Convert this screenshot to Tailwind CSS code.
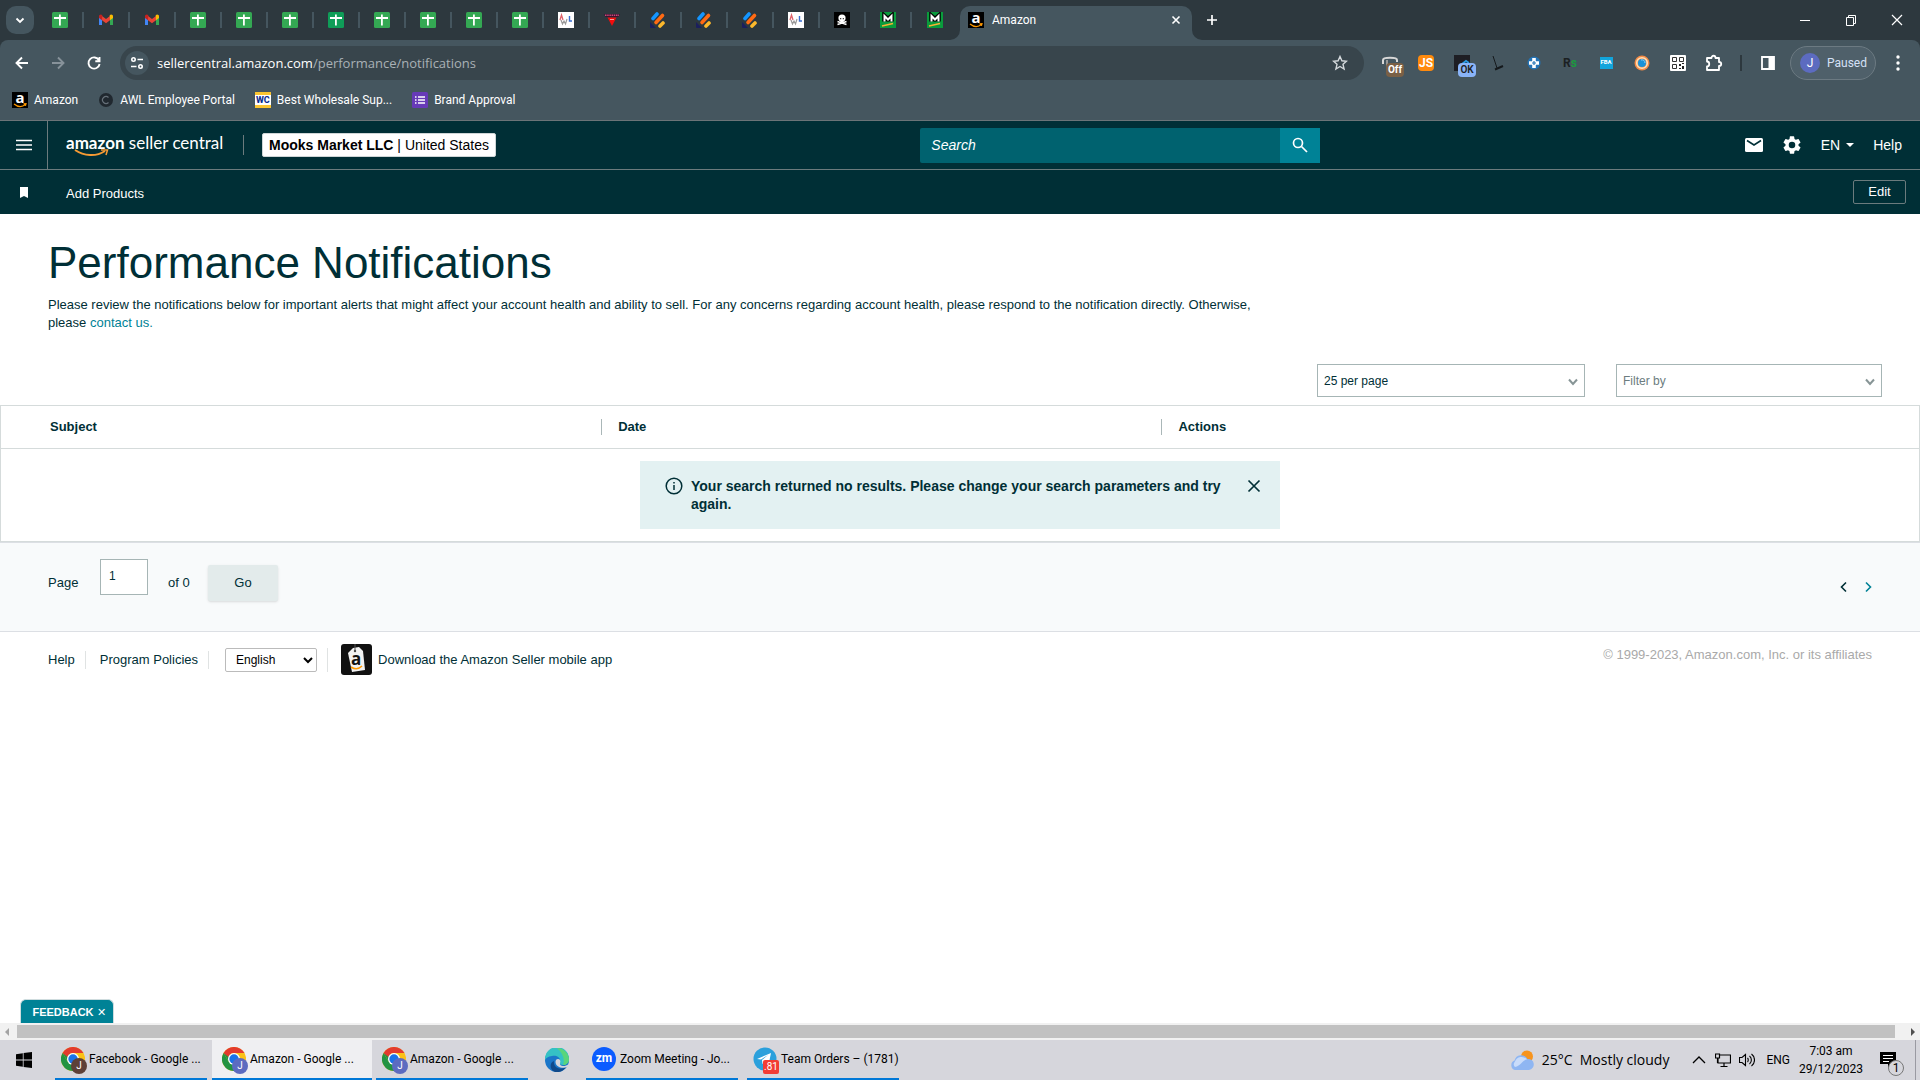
<!DOCTYPE html>
<html lang="en">
<head>
    <meta charset="UTF-8">
    <meta name="viewport" content="width=device-width, initial-scale=1.0">
    <title>Amazon</title>
    <script src="https://cdn.jsdelivr.net/npm/@tailwindcss/browser@4"></script>
</head>
<body class="min-h-screen flex flex-col bg-white text-[#002f36] text-[13px] leading-[18px] font-['Liberation_Sans',Arial,sans-serif]">

    <!-- Shared icons -->
    <svg class="hidden">
        <symbol id="sheets" viewBox="0 0 16 16"><rect width="16" height="16" rx="1.5" fill="#34a853"/><path d="M7.9 2.5v11M2 6h12" stroke="#fff" stroke-width="1.8"/></symbol>
        <symbol id="sheets-dark" viewBox="0 0 16 16"><rect width="16" height="16" rx="1.5" fill="#0f9d58"/><path d="M7.9 2.5v11M2 6h12" stroke="#fff" stroke-width="1.8"/></symbol>
        <symbol id="gmail" viewBox="0 0 16 16"><path d="M1 4.5v8.5h3V7z" fill="#4285f4"/><path d="M12 7v6h3V4.500z" fill="#34a853"/><path d="M4 4v4.200l4 3 4-3V4L8 7z" fill="#ea4335"/><path d="M1 4.500C1 2.600 3 2 4.300 3.200L4 8.200 1 6z" fill="#c5221f"/><path d="M15 4.500c0-1.900-2-2.500-3.300-1.300l.3 5L15 6z" fill="#fbbc04"/></symbol>
        <symbol id="awl" viewBox="0 0 16 16"><rect width="16" height="16" fill="#fff"/><path d="M2 8l1.500-5L5 8" stroke="#e0626a" stroke-width="1.300" fill="none"/><path d="M3 8l1.500 4L6 9l1.500 3L9 7" stroke="#999" stroke-width="1.200" fill="none"/><path d="M11.500 4v5H14" stroke="#3b6fd0" stroke-width="1.400" fill="none"/></symbol>
        <symbol id="wedge" viewBox="0 0 16 16"><path d="M0 2h16l-1.500 3h-13z" fill="#3a1430"/><path d="M1 3.300h14" stroke="#c94a7a" stroke-width="1.500" stroke-dasharray="1.500 .7"/><path d="M3.500 5.500h9L8 14z" fill="#f20d0d"/><path d="M6 7.500h4" stroke="#f8a0a0"/></symbol>
        <symbol id="stripes" viewBox="0 0 16 16"><path d="M0 10l6 6H1a1 1 0 0 1-1-1z" fill="#1b1f5e"/><g stroke-linecap="round" stroke-width="3.600"><path d="M3 6.500L7 2" stroke="#1495ff"/><path d="M6 10.500L12.500 3.500" stroke="#ff6a13"/><path d="M10 14l3-3" stroke="#fdb92c"/></g></symbol>
        <symbol id="skull" viewBox="0 0 16 16"><rect width="16" height="16" fill="#000"/><circle cx="8" cy="6" r="3.600" fill="#fff"/><path d="M6.300 7h3.400v3H6.300z" fill="#fff"/><path d="M3.500 9.500l9 3M12.500 9.500l-9 3" stroke="#fff" stroke-width="1.500"/><circle cx="6.700" cy="6.700" r=".6"/><circle cx="9.300" cy="6.700" r=".6"/></symbol>
        <symbol id="menards" viewBox="0 0 16 16"><rect width="16" height="16" fill="#0a9b3c"/><path d="M4.500 9.500V4L8 7l3.500-3v5.500" stroke="#000" stroke-width="4.500" fill="none"/><path d="M4.500 9.500V4L8 7.500 11.500 4v5.500" stroke="#fff" stroke-width="2" fill="none"/><path d="M2 14l11-2.500" stroke="#f9b233" stroke-width="1.500"/></symbol>
        <symbol id="amazon" viewBox="0 0 16 16"><rect width="16" height="16" fill="#000"/><text x="8" y="11" text-anchor="middle" font-family="Open Sans,sans-serif" font-weight="700" font-size="15" fill="#fff">a</text><path d="M2 12c4 3.300 8 3.300 11.500.600M11.500 11.800l2.500-.2-.6 2.200" stroke="#f90" stroke-width="1.200" fill="none"/></symbol>
        <symbol id="chrome" viewBox="0 0 24 24"><circle cx="12" cy="12" r="12" fill="#fbc116"/><path d="M1.600 6A12 12 0 0 0 12 24l5.200-9L12 12 6.800 15z" fill="#229342"/><path d="M1.600 6l5.200 9L12 8z" fill="#229342"/><path d="M1.600 6A12 12 0 0 1 22.400 6H12a6 6 0 0 0-5.500 4z" fill="#e33b2e"/><circle cx="12" cy="12" r="6" fill="#fff"/><circle cx="12" cy="12" r="4.700" fill="#1a73e8"/></symbol>
    </svg>

    <!-- Browser window -->
    <div class="bg-[#2d383e] text-white text-[12px] leading-4 font-[Roboto,'Noto_Sans',sans-serif]">
        <div class="h-10 flex items-center">
            <button class="ml-[6px] mr-1 size-7 rounded-[10px] bg-[#45565f] flex items-center justify-center" aria-label="Search tabs">
                <svg class="size-4" viewBox="0 0 16 16" fill="none" stroke="#fff" stroke-width="1.800"><path d="M4.500 6.500L8 10l3.500-3.500"/></svg>
            </button>
            <div class="flex items-center">
                <div class="w-[46px] h-4 flex justify-center border-r-2 border-[#45565f]"><svg class="size-4"><use href="#sheets"/></svg></div>
                <div class="w-[46px] h-4 flex justify-center border-r-2 border-[#45565f]"><svg class="size-4"><use href="#gmail"/></svg></div>
                <div class="w-[46px] h-4 flex justify-center border-r-2 border-[#45565f]"><svg class="size-4"><use href="#gmail"/></svg></div>
                <div class="w-[46px] h-4 flex justify-center border-r-2 border-[#45565f]"><svg class="size-4"><use href="#sheets"/></svg></div>
                <div class="w-[46px] h-4 flex justify-center border-r-2 border-[#45565f]"><svg class="size-4"><use href="#sheets"/></svg></div>
                <div class="w-[46px] h-4 flex justify-center border-r-2 border-[#45565f]"><svg class="size-4"><use href="#sheets"/></svg></div>
                <div class="w-[46px] h-4 flex justify-center border-r-2 border-[#45565f]"><svg class="size-4"><use href="#sheets-dark"/></svg></div>
                <div class="w-[46px] h-4 flex justify-center border-r-2 border-[#45565f]"><svg class="size-4"><use href="#sheets"/></svg></div>
                <div class="w-[46px] h-4 flex justify-center border-r-2 border-[#45565f]"><svg class="size-4"><use href="#sheets"/></svg></div>
                <div class="w-[46px] h-4 flex justify-center border-r-2 border-[#45565f]"><svg class="size-4"><use href="#sheets"/></svg></div>
                <div class="w-[46px] h-4 flex justify-center border-r-2 border-[#45565f]"><svg class="size-4"><use href="#sheets"/></svg></div>
                <div class="w-[46px] h-4 flex justify-center border-r-2 border-[#45565f]"><svg class="size-4"><use href="#awl"/></svg></div>
                <div class="w-[46px] h-4 flex justify-center border-r-2 border-[#45565f]"><svg class="size-4"><use href="#wedge"/></svg></div>
                <div class="w-[46px] h-4 flex justify-center border-r-2 border-[#45565f]"><svg class="size-4"><use href="#stripes"/></svg></div>
                <div class="w-[46px] h-4 flex justify-center border-r-2 border-[#45565f]"><svg class="size-4"><use href="#stripes"/></svg></div>
                <div class="w-[46px] h-4 flex justify-center border-r-2 border-[#45565f]"><svg class="size-4"><use href="#stripes"/></svg></div>
                <div class="w-[46px] h-4 flex justify-center border-r-2 border-[#45565f]"><svg class="size-4"><use href="#awl"/></svg></div>
                <div class="w-[46px] h-4 flex justify-center border-r-2 border-[#45565f]"><svg class="size-4"><use href="#skull"/></svg></div>
                <div class="w-[46px] h-4 flex justify-center border-r-2 border-[#45565f]"><svg class="size-4"><use href="#menards"/></svg></div>
                <div class="w-[46px] h-4 flex justify-center"><svg class="size-4"><use href="#menards"/></svg></div>
            </div>
            <div class="self-end flex items-end -ml-2">
                <svg class="size-[10px]" viewBox="0 0 10 10"><path d="M10 0v10H0A10 10 0 0 0 10 0z" fill="#45565f"/></svg>
                <div class="w-[232px] h-[34px] rounded-t-[10px] bg-[#45565f] flex items-center pl-2 pr-2 pb-[6px] gap-2">
                    <svg class="size-4"><use href="#amazon"/></svg>
                    <span class="flex-1">Amazon</span>
                    <button aria-label="Close tab"><svg class="size-4" viewBox="0 0 16 16" stroke="#fff" stroke-width="1.600"><path d="M4.500 4.500l7 7M11.500 4.500l-7 7"/></svg></button>
                </div>
                <svg class="size-[10px]" viewBox="0 0 10 10"><path d="M0 0v10h10A10 10 0 0 1 0 0z" fill="#45565f"/></svg>
            </div>
            <button class="ml-[2px]" aria-label="New tab"><svg class="size-4" viewBox="0 0 16 16" stroke="#fff" stroke-width="1.700"><path d="M8 3v10M3 8h10"/></svg></button>
            <div class="ml-auto flex">
                <button class="w-[46px] flex justify-center" aria-label="Minimize"><svg class="size-4" viewBox="0 0 16 16" stroke="#fff"><path d="M3 8.500h10"/></svg></button>
                <button class="w-[46px] flex justify-center" aria-label="Restore"><svg class="size-4" viewBox="0 0 16 16" stroke="#fff" fill="none"><path d="M3.500 5.500h7v8h-7zM5.500 5.500v-2h7v8h-2"/></svg></button>
                <button class="w-[46px] flex justify-center" aria-label="Close"><svg class="size-4" viewBox="0 0 16 16" stroke="#fff" stroke-width="1.200"><path d="M3 3l10 10M13 3L3 13"/></svg></button>
            </div>
        </div>

        <!-- Address bar -->
        <div class="bg-[#45565f] rounded-t-lg">
            <div class="h-[46px] flex items-center pl-3 pr-3">
                <div class="flex gap-4 mr-4">
                    <button aria-label="Back"><svg class="size-5" viewBox="0 0 20 20" fill="none" stroke="#fff" stroke-width="1.900"><path d="M16 10H5M10 4.500L4.500 10l5.500 5.500"/></svg></button>
                    <button aria-label="Forward"><svg class="size-5" viewBox="0 0 20 20" fill="none" stroke="#87929a" stroke-width="1.900"><path d="M4 10h11M10 4.500l5.500 5.500-5.500 5.500"/></svg></button>
                    <button aria-label="Reload"><svg class="size-5" viewBox="0 0 20 20" fill="none" stroke="#fff" stroke-width="1.900"><path d="M15 7.300A5.600 5.600 0 1 0 15.600 11M15.500 4v4.200h-4.200"/></svg></button>
                </div>
                <div class="flex-1 h-[34px] rounded-full bg-[#38454c] flex items-center pl-[5px] pr-4">
                    <span class="size-6 rounded-full bg-[#45565f] flex items-center justify-center mr-2">
                        <svg class="size-4" viewBox="0 0 16 16" fill="none" stroke="#fff" stroke-width="1.600"><circle cx="4.500" cy="4.500" r="1.700"/><path d="M8.500 4.500H14M2 11.500h5.500"/><circle cx="11.500" cy="11.500" r="1.700"/></svg>
                    </span>
                    <span class="flex-1 text-[13px] text-[#a9b1b6] font-['Open_Sans','Noto_Sans',sans-serif]"><span class="text-white">sellercentral.amazon.com</span>/performance/notifications</span>
                    <button aria-label="Bookmark this tab"><svg class="size-4" viewBox="0 0 16 16" fill="none" stroke="#d5dadd" stroke-width="1.400"><path d="M8 1.500l1.900 4.300 4.600.4-3.500 3.100 1.100 4.700L8 11.500 3.900 14 5 9.300 1.500 6.200l4.600-.4z"/></svg></button>
                </div>
                <div class="ml-2 flex items-center">
                    <div class="relative w-9 flex justify-center">
                        <svg class="size-4" viewBox="0 0 16 16"><path d="M1 9V5c0-3 14-3 14 0v2" fill="none" stroke="#d8d8d8" stroke-width="2"/><path d="M5 5v10" stroke="#999" stroke-width="2"/></svg>
                        <span class="absolute left-[14px] top-2 w-[18px] text-center rounded-sm bg-[#7a6046] text-[10px] leading-[14px] font-bold">Off</span>
                    </div>
                    <div class="w-9 flex justify-center"><span class="size-4 rounded-sm bg-[#ff8a0d] text-center text-[12px] font-bold">JS</span></div>
                    <div class="relative w-9 flex justify-center">
                        <svg class="size-4" viewBox="0 0 16 16"><rect width="16" height="16" fill="#1e1e24"/><path d="M8 9l4-3 3 2" stroke="#2997e0" stroke-width="2" fill="none"/></svg>
                        <span class="absolute left-[14px] top-2 w-[18px] text-center rounded-sm bg-[#8ab4f8] text-[#202124] text-[10px] leading-[14px] font-semibold">OK</span>
                    </div>
                    <div class="w-9 flex justify-center"><svg class="size-4" viewBox="0 0 16 16" fill="none" stroke="#15191c"><path d="M3 1l4 12"/><path d="M5 14.500l8-3.500" stroke-width="2"/></svg></div>
                    <div class="w-9 flex justify-center"><svg class="size-4" viewBox="0 0 16 16"><circle cx="8" cy="8" r="6.500" fill="#2473b5"/><path d="M8 3v10M3 8h10" stroke="#fff" stroke-width="3.600"/><path d="M8 6v4M6 8h4" stroke="#2473b5" stroke-width="1.200"/></svg></div>
                    <div class="w-9 text-center text-[12px] font-bold text-[#1b1f22]">R<span class="text-[#1b9a3e]">s</span></div>
                    <div class="w-9 flex justify-center"><span class="w-[13px] h-3 bg-[#12a5dc] text-center text-[6px] leading-[10px] font-bold">FBA</span></div>
                    <div class="w-9 flex justify-center"><svg class="size-4" viewBox="0 0 16 16"><circle cx="8" cy="8" r="7.500" fill="#f58b45"/><circle cx="8" cy="8" r="5.300" fill="none" stroke="#fde0b8" stroke-width="1.600"/><circle cx="8" cy="8" r="4" fill="#1a92d8"/><path d="M7 5a3 3 0 0 1 4 3" stroke="#8ed0f4" fill="none"/></svg></div>
                    <div class="w-9 flex justify-center"><svg class="size-4" viewBox="0 0 16 16"><rect width="16" height="16" rx="1" fill="#fff"/><path d="M2.500 2.500h4v4h-4zM9.500 2.500h4v4h-4zM2.500 9.500h4v4h-4z" fill="none" stroke="#333"/><path d="M9 9h2v2H9zM12 11h2v3h-2zM9 13h2v1H9zM12 8h2v1h-2z" fill="#222"/></svg></div>
                    <button class="w-9 flex justify-center" aria-label="Extensions"><svg class="size-5" viewBox="0 0 20 20" fill="none" stroke="#fff" stroke-width="1.800" stroke-linejoin="round"><path d="M3 5h4.500c0-3 4-3 4 0H15v4c3 0 3 4 0 4v4H3v-3.500c3 0 3-5 0-5z"/></svg></button>
                </div>
                <div class="w-[2px] h-4 mx-2 bg-[#2d383e]"></div>
                <button class="w-9 flex justify-center" aria-label="Side panel"><svg class="size-4" viewBox="0 0 16 16"><path d="M2 2h12v12H2z" fill="none" stroke="#fff" stroke-width="1.800"/><path d="M8.500 2H14v12H8.500z" fill="#fff"/></svg></button>
                <button class="ml-1 w-[86px] h-[34px] rounded-full border border-[#6c7a82] bg-[#4f606a] flex items-center pl-[9px] gap-[7px] text-[#d5e0f7]">
                    <span class="size-5 rounded-full bg-[#5c6bc0] text-white leading-5">J</span>Paused
                </button>
                <button class="ml-3" aria-label="Menu"><svg class="size-5" viewBox="0 0 20 20" fill="#fff"><circle cx="10" cy="4" r="1.700"/><circle cx="10" cy="10" r="1.700"/><circle cx="10" cy="16" r="1.700"/></svg></button>
            </div>

            <!-- Bookmarks -->
            <div class="h-[35px] flex items-center pl-3 pb-[6px] gap-5 border-b border-[#6b7478]">
                <a href="#" class="flex items-center gap-[6px]"><svg class="size-4"><use href="#amazon"/></svg>Amazon</a>
                <a href="#" class="flex items-center gap-[6px]"><svg class="size-4" viewBox="0 0 16 16"><circle cx="8" cy="8" r="7" fill="#20282f"/><path d="M10.500 5.500a3.500 3.500 0 1 0 0 5" fill="none" stroke="#667079" stroke-width="1.200"/></svg>AWL Employee Portal</a>
                <a href="#" class="flex items-center gap-[6px]"><span class="size-4 border-y-3 border-[#fbc531] bg-white text-[#0b2d8f] text-[9px] leading-[10px] font-extrabold text-center">WC</span>Best Wholesale Sup...</a>
                <a href="#" class="flex items-center gap-[6px]"><svg class="size-4" viewBox="0 0 16 16"><rect width="16" height="16" rx="1.500" fill="#673ab7"/><path d="M3 5h1.500M6 5h7M3 8h1.500M6 8h7M3 11h1.500M6 11h7" stroke="#fff" stroke-width="1.500"/></svg>Brand Approval</a>
            </div>
        </div>
    </div>

    <!-- Seller Central header -->
    <header class="bg-[#002f36] text-white">
        <div class="h-[49px] flex items-center justify-between border-b border-[#6b7b7d]">
            <div class="h-full flex items-center">
                <button class="w-12 h-full flex items-center justify-center border-r border-[#6b7b7d]" aria-label="Menu"><svg class="w-4 h-3" viewBox="0 0 16 12" stroke="#fff" stroke-width="1.600"><path d="M0 1.500h16M0 6h16M0 10.500h16"/></svg></button>
                <a href="#" class="relative w-[160px] ml-[18px] pb-1 text-[17px] leading-6 whitespace-nowrap font-[Lato,sans-serif]"><b>amazon</b> seller central
                    <svg class="absolute left-2 top-[18px] w-9 h-2" viewBox="0 0 36 8" fill="none" stroke="#f79b34" stroke-width="2"><path d="M1 1c9 6 21 7 30 1"/><path d="M27 1h6.500L32 6" stroke-width="1.500"/></svg>
                </a>
                <div class="w-px h-5 ml-[17px] mr-[18px] bg-[#6b7b7d]"></div>
                <button class="h-6 rounded-xs border border-[#cfd6d7] bg-white text-black text-[14px] px-[6px] whitespace-nowrap"><b>Mooks Market LLC</b> <span>| United States</span></button>
            </div>
            <form class="flex">
                <input type="text" placeholder="Search" aria-label="Search" class="w-[360px] h-[35px] rounded-l-xs bg-[#00626f] px-[11px] text-[14px] italic placeholder:text-white">
                <button type="button" class="w-10 h-[35px] bg-[#008296] flex items-center justify-center" aria-label="Go"><svg class="size-4" viewBox="0 0 16 16" fill="none" stroke="#fff" stroke-width="1.700"><circle cx="6" cy="6" r="4.500"/><path d="M9.500 9.500L15 15"/></svg></button>
            </form>
            <nav class="flex items-center text-[14px] pr-[18px] gap-[19px]">
                <a href="#" aria-label="Messages"><svg class="w-[18px] h-[14px]" viewBox="0 0 18 14"><rect width="18" height="14" rx="1.500" fill="#fff"/><path d="M2 2.500l7 4.500 7-4.500" fill="none" stroke="#002f36" stroke-width="1.600"/></svg></a>
                <a href="#" aria-label="Settings"><svg class="size-5" viewBox="1 1 22 22" fill="#fff"><path d="M19.140 12.940c.04-.3.06-.61.06-.94s-.02-.64-.07-.94l2.030-1.580a.49.49 0 0 0 .12-.61l-1.920-3.320a.49.49 0 0 0-.59-.22l-2.390.96c-.5-.38-1.030-.7-1.620-.94l-.36-2.540A.48.48 0 0 0 13.920 2.400h-3.840c-.24 0-.43.17-.47.41l-.36 2.540c-.59.24-1.130.57-1.620.94l-2.390-.96a.48.48 0 0 0-.59.22L2.740 8.870a.47.47 0 0 0 .12.61l2.030 1.580c-.05.3-.09.63-.09.94s.02.64.07.94l-2.030 1.580a.49.49 0 0 0-.12.61l1.920 3.320c.12.22.37.29.59.22l2.390-.96c.5.38 1.030.7 1.620.94l.36 2.540c.05.24.24.41.48.41h3.840c.24 0 .44-.17.47-.41l.36-2.540c.59-.24 1.130-.56 1.620-.94l2.390.96c.22.08.47 0 .59-.22l1.920-3.320a.47.47 0 0 0-.12-.61zM12 15.600a3.600 3.600 0 1 1 0-7.200 3.600 3.600 0 0 1 0 7.200z"/></svg></a>
                <button class="flex items-center gap-[6px]">EN <span class="border-x-4 border-t-4 border-x-transparent border-t-white"></span></button>
                <a href="#">Help</a>
            </nav>
        </div>
        <div class="h-[44px] flex items-center pr-[14px]">
            <svg class="w-2 h-[11px] ml-5" viewBox="0 0 8 11"><path d="M0 0h8v11L4 9l-4 2z" fill="#fff"/></svg>
            <a href="#" class="ml-[38px] pt-[3px] flex-1">Add Products</a>
            <button class="w-[53px] h-6 rounded-xs border border-[#6b7b7d]">Edit</button>
        </div>
    </header>

    <!-- Page -->
    <main class="pt-5">
        <div class="px-12">
            <h1 class="text-[44px] leading-[58px]">Performance Notifications</h1>
            <p class="mt-1 max-w-[1240px]">Please review the notifications below for important alerts that might affect your account health and ability to sell. For any concerns regarding account health, please respond to the notification directly. Otherwise, please <a href="#" class="text-[#008296]">contact us.</a></p>
        </div>
        <div class="flex justify-end gap-[31px] mt-8 mb-2 pr-[38px]">
            <div class="relative">
                <select aria-label="Results per page" class="appearance-none w-[268px] h-[33px] border border-[#a6b5b5] bg-white px-[6px] text-[12px]"><option>25 per page</option></select>
                <svg class="absolute right-[6px] top-[14px] w-3 h-2 pointer-events-none" viewBox="0 0 12 8" fill="none" stroke="#879596" stroke-width="2"><path d="M2 1.500l4 4.500 4-4.500"/></svg>
            </div>
            <div class="relative">
                <select aria-label="Filter by" class="appearance-none w-[266px] h-[33px] border border-[#a6b5b5] bg-white px-[6px] text-[12px] text-[#6c7d80]"><option>Filter by</option></select>
                <svg class="absolute right-[6px] top-[14px] w-3 h-2 pointer-events-none" viewBox="0 0 12 8" fill="none" stroke="#879596" stroke-width="2"><path d="M2 1.500l4 4.500 4-4.500"/></svg>
            </div>
        </div>
        <table class="w-full table-fixed border border-[#d5dbdb] text-left">
            <thead>
                <tr class="h-[43px] border-b border-[#d5dbdb]">
                    <th class="w-[31.3%] pl-[49px]">Subject</th>
                    <th class="w-[29.2%]"><div class="border-l border-[#aab7b8] pl-4 leading-4">Date</div></th>
                    <th><div class="border-l border-[#aab7b8] pl-4 leading-4">Actions</div></th>
                </tr>
            </thead>
            <tbody>
                <tr>
                    <td colspan="3" class="py-3">
                        <div class="w-[640px] mx-auto flex items-start bg-[#e3f1f2] px-[18px] pt-4 pb-4 gap-2 text-[14px] font-bold">
                            <svg class="size-[18px] ml-[7px] shrink-0" viewBox="0 0 18 18" fill="none" stroke="#002f36" stroke-width="1.500"><circle cx="9" cy="9" r="7.800"/><path d="M9 8v5M9 5v1.500"/></svg>
                            <p class="flex-1">Your search returned no results. Please change your search parameters and try again.</p>
                            <button class="mt-px" aria-label="Dismiss"><svg class="size-4" viewBox="0 0 16 16" stroke="#002f36" stroke-width="1.700"><path d="M2.500 2.500l11 11M13.500 2.500l-11 11"/></svg></button>
                        </div>
                    </td>
                </tr>
            </tbody>
        </table>
        <div class="flex justify-between bg-[#f8fafb] border-y border-[#dcdfe4] pl-12 pr-[46px] pt-4 pb-[30px]">
            <form class="flex items-end">
                <label for="page" class="w-[52px] leading-9">Page</label>
                <input id="page" type="text" value="1" class="self-start w-12 h-9 mb-[6px] border border-[#a6b5b5] bg-white px-2 pb-[2px] text-[12px]">
                <span class="w-[60px] pl-5 leading-9">of 0</span>
                <button type="button" class="w-[70px] h-9 rounded-xs bg-[#e3ebeb] shadow">Go</button>
            </form>
            <div class="flex items-end gap-3 pb-2">
                <button aria-label="Previous"><svg class="size-3" viewBox="0 0 12 12" fill="none" stroke="#002f36" stroke-width="1.600"><path d="M8 1.500L3.500 6 8 10.500"/></svg></button>
                <button aria-label="Next"><svg class="size-3" viewBox="0 0 12 12" fill="none" stroke="#008296" stroke-width="1.600"><path d="M4 1.500L8.500 6 4 10.500"/></svg></button>
            </div>
        </div>
    </main>

    <footer class="flex justify-between px-12 pt-3">
        <div class="flex items-center">
            <a href="#" class="pr-[10px] border-r border-[#e0e3e3]">Help</a>
            <a href="#" class="px-[10px] ml-1 border-r border-[#e0e3e3]">Program Policies</a>
            <span class="pl-4 pr-[10px] border-r border-[#e0e3e3]">
                <select aria-label="Language" class="w-[92px] h-6 rounded-xs border border-[#bbb] bg-white text-black text-[12px] pl-[6px]"><option>English</option></select>
            </span>
            <a href="#" class="flex items-center gap-[6px] ml-[13px]">
                <svg class="size-[31px]" viewBox="0 0 31 31"><rect width="31" height="31" rx="3" fill="#111"/><path d="M12 4l6-1 4 4 2 19-13 2L7 9z" fill="#f2f2f2"/><circle cx="14" cy="7" r="1.200" fill="#444"/><path d="M14 7V0" stroke="#555"/><text x="10" y="21" font-family="Open Sans,sans-serif" font-weight="700" font-size="17" fill="#111">a</text><path d="M10 23c4 2.500 8 2 11-1" fill="none" stroke="#f90" stroke-width="1.500"/></svg>
                Download the Amazon Seller mobile app
            </a>
        </div>
        <p class="mt-[2px] text-[#a9a9a9]">© 1999-2023, Amazon.com, Inc. or its affiliates</p>
    </footer>

    <!-- Feedback tab and scrollbar -->
    <div class="mt-auto">
        <button class="block ml-5 h-6 w-[94px] pl-1 rounded-t-md border border-b-0 border-[#cfdcde] bg-[#008296] text-white text-[11px] font-bold">FEEDBACK <span class="font-normal">✕</span></button>
        <div class="h-[17px] flex items-center justify-between bg-[#f1f1f1] px-[5px] gap-2">
            <span class="border-y-4 border-r-4 border-y-transparent border-r-[#a3a3a3]"></span>
            <span class="flex-1 h-[13px] bg-[#c1c1c1] mr-2"></span>
            <span class="border-y-4 border-l-4 border-y-transparent border-l-[#505050]"></span>
        </div>
    </div>

    <!-- Taskbar -->
    <div class="h-10 flex bg-[#d6d6dc] text-black text-[12px] leading-4 whitespace-nowrap font-[Roboto,'Noto_Sans',sans-serif]">
        <button class="w-12 mr-[7px] flex items-center justify-center" aria-label="Start"><svg class="size-4" viewBox="0 0 16 16"><path d="M0 2.200l6.800-1v6.400H0zM7.600 1.100L16 0v7.600H7.600zM0 8.400h6.800v6.400L0 13.800zM7.600 8.400H16V16l-8.400-1.100z"/></svg></button>
        <button class="relative w-[152px] mr-[5px] border-b-2 border-[#0078d7] flex items-center gap-1 pl-[6px]">
            <svg class="size-6"><use href="#chrome"/></svg>Facebook - Google ...
            <span class="absolute left-4 top-[18px] size-4 rounded-full bg-[#5d4037] text-white text-[10px]">J</span>
        </button>
        <button class="relative w-[160px] mr-1 bg-[#efeff2] border-b-2 border-[#0078d7] flex items-center gap-1 pl-[10px]">
            <svg class="size-6"><use href="#chrome"/></svg>Amazon - Google ...
            <span class="absolute left-5 top-[18px] size-4 rounded-full bg-[#5c6bc0] text-white text-[10px]">J</span>
        </button>
        <button class="relative w-[152px] border-b-2 border-[#0078d7] flex items-center gap-1 pl-[6px]">
            <svg class="size-6"><use href="#chrome"/></svg>Amazon - Google ...
            <span class="absolute left-4 top-[18px] size-4 rounded-full bg-[#5c6bc0] text-white text-[10px]">J</span>
        </button>
        <button class="w-[58px] flex items-center justify-center" aria-label="Edge"><svg class="size-6" viewBox="0 0 24 24"><circle cx="12" cy="12" r="12" fill="#1b76c9"/><path d="M0 11A12 12 0 0 1 24 11c0 4-3 6-6 6s-4-1-3-3c1-5-4-7-8-6-4 .600-6 2-7 4z" fill="#35c1c5"/><path d="M12 0a12 12 0 0 1 12 11c0 4-3 6-6 6 2-5 0-12-6-17z" fill="#5ad57b"/><path d="M9 13c-1 6 5 10 12 6-3 5-9 6-12 4.600C4 21 5 14 9 13z" fill="#114a8b"/><path d="M13 11c2 0 3 2 2 4-.5 2 1 3 3 3 2.500 0 4-.5 5.500-2l-1 3c-5 2-12 0-12-5 0-2 1-3 2.500-3z" fill="#d6d6dc"/></svg></button>
        <button class="w-[152px] mr-[9px] border-b-2 border-[#0078d7] flex items-center gap-1 pl-[6px]">
            <span class="size-6 rounded-full bg-[#0b5cff] text-white text-[12px] leading-[22px] font-bold">zm</span>Zoom Meeting - Jo...
        </button>
        <button class="relative w-[152px] border-b-2 border-[#0078d7] flex items-center gap-1 pl-[6px]">
            <svg class="size-6" viewBox="0 0 24 24"><circle cx="12" cy="12" r="11.500" fill="#2ba0dc"/><path d="M4 12l14-6-2.500 12-4-3-2 2-.5-4 6-5-7 4.500z" fill="#fff"/></svg>Team Orders – (1781)
            <span class="absolute left-4 top-5 w-4 rounded-xs bg-[#f23c34] text-white text-[10px] leading-[14px]">.81</span>
        </button>
        <div class="ml-auto flex items-center">
            <svg class="w-6 h-5 mr-2" viewBox="0 0 24 20"><circle cx="17" cy="6.500" r="6" fill="#f7941d"/><path d="M5 20a5 5 0 0 1-.5-9.500A7 7 0 0 1 17.500 9 5.500 5.500 0 0 1 19 20z" fill="#8fb6f2"/><path d="M5 17a4 4 0 0 1 0-5.500A7 7 0 0 1 17 9.500c-4 0-6 6-12 7.500z" fill="#c9dcfa"/></svg>
            <span class="text-[14px] mr-[22px] font-['Open_Sans','Noto_Sans',sans-serif]">25°C&nbsp; Mostly cloudy</span>
            <svg class="w-4 h-4 mr-2" viewBox="0 0 16 16" fill="none" stroke="#000" stroke-width="1.300"><path d="M2 11l6-6 6 6"/></svg>
            <svg class="size-4 mr-2" viewBox="0 0 16 16" fill="none" stroke="#000" stroke-width="1.200"><path d="M5 3h10.500v8H3V6.500M.5 2h4v4h-4zM9 11v3M5.500 14.500h7M2.500 6v5"/></svg>
            <svg class="size-4 mr-[11px]" viewBox="0 0 16 16" fill="none" stroke="#000" stroke-width="1.100"><path d="M.5 5.500H3L6.500 2.500v11L3 10.500H.5zM8.500 6c1 1 1 3 0 4M10.500 4c2.500 2 2.500 6 0 8M12.500 2c4 3 4 9 0 12"/></svg>
            <span class="mr-2">ENG</span>
            <span class="w-[66px] text-center leading-[18px] mr-4">7:03 am<br>29/12/2023</span>
            <div class="relative w-9 mr-1 border-r border-[#9a9aa2] h-full flex items-center">
                <svg class="size-4" viewBox="0 0 16 16"><path d="M0 0h16v12h-5l-3 4v-4H0z"/><path d="M3 3.500h10M3 6.500h10M3 9.500h6" stroke="#fff"/></svg>
                <span class="absolute left-2 top-5 size-4 rounded-full border border-[#777] bg-[#d6d6dc] text-center leading-[14px]">1</span>
            </div>
        </div>
    </div>
</body>
</html>
